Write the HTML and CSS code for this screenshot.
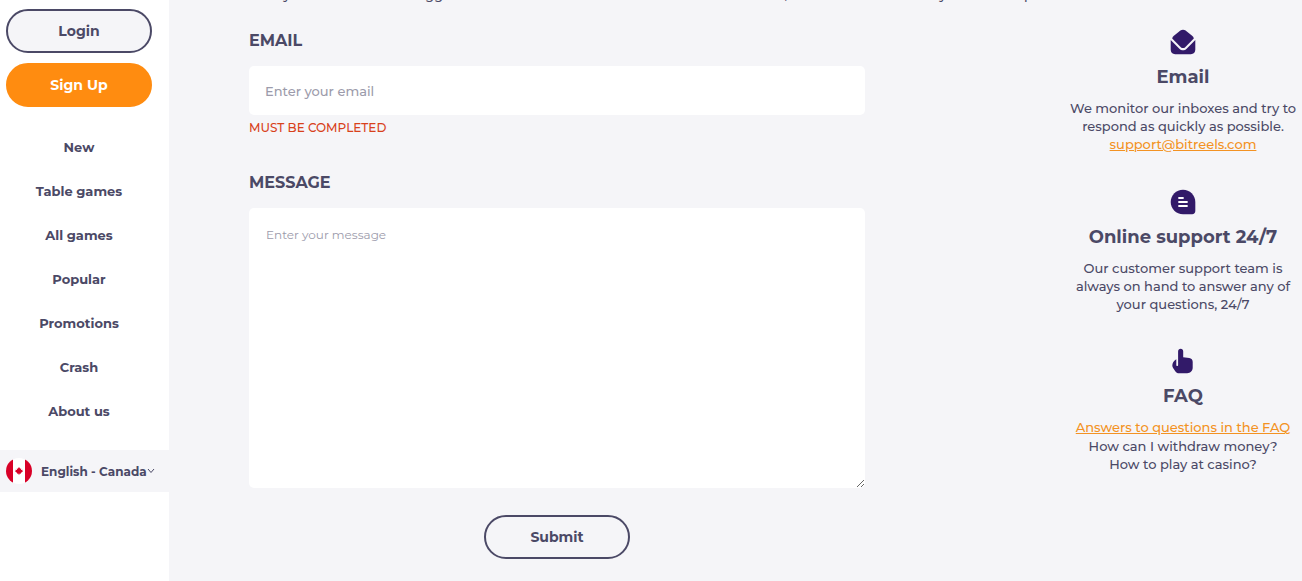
FILE: index.html
```html
<!DOCTYPE html>
<html lang="en">
<head>
    <meta charset="UTF-8">
    <meta name="viewport" content="width=device-width, initial-scale=1.0">
    <title>Contact us</title>
    <link rel="stylesheet" href="styles.css">
</head>
<body>
    <div class="sidebar">
        <button type="button" class="btn">Login</button>
        <button type="button" class="btn btn-orange">Sign Up</button>

        <nav class="menu">
            <a href="#">New</a>
            <a href="#">Table games</a>
            <a href="#">All games</a>
            <a href="#">Popular</a>
            <a href="#">Promotions</a>
            <a href="#">Crash</a>
            <a href="#">About us</a>
        </nav>

        <div class="lang">
            <svg class="flag" viewBox="0 0 26 26" aria-hidden="true">
                <clipPath id="round"><circle cx="13" cy="13" r="13"/></clipPath>
                <g clip-path="url(#round)">
                    <rect width="26" height="26" fill="#fff"/>
                    <rect width="7" height="26" fill="#d80027"/>
                    <rect x="19" width="7" height="26" fill="#d80027"/>
                    <path d="M13 9l1.200 1.800 1-.3-.2 1.500 1.600-.3-.3 1 .7.5-2.200 1.700v.8h-1.500V17h-.6v-1.300h-1.500v-.8L9 13.200l.7-.5-.3-1 1.600.3-.2-1.500 1 .3z" fill="#d80027"/>
                </g>
            </svg>
            <select aria-label="Language">
                <option>English - Canada</option>
            </select>
            <svg class="arrow" viewBox="0 0 8 6" aria-hidden="true"><path d="M1 1l3 3.500 3-3.500" fill="none" stroke="#4b4966"/></svg>
        </div>
    </div>

    <div class="content">
        <p class="intro"><span>It may have several new suggestions that will resolve the matter in a few minutes, but we would rather try to be of help</span></p>

        <div class="columns">
            <form>
                <label for="email">EMAIL</label>
                <input type="email" id="email" name="email" placeholder="Enter your email">
                <div class="error">MUST BE COMPLETED</div>

                <label for="message">MESSAGE</label>
                <textarea id="message" name="message" placeholder="Enter your message"></textarea>

                <button type="submit" class="btn">Submit</button>
            </form>

            <aside>
                <section>
                    <svg class="icon" viewBox="0 0 26 26" fill="#321a69" aria-hidden="true">
                        <path d="M10.400 1.500c1.500-1.100 3.700-1.100 5.200 0l6.800 5.600c.8.700 1.200 1.400 1.400 2.400l-8.600 8.700c-1.200 1.200-3.200 1.200-4.400 0L2.200 9.500c.2-1 .6-1.700 1.400-2.400z"/>
                        <path d="M.7 11l8.700 8.700c2 2 5.200 2 7.200 0l8.700-8.700v9.800c0 2.600-1.800 4.400-4.400 4.400H5.100c-2.600 0-4.400-1.800-4.400-4.400z"/>
                    </svg>
                    <h3>Email</h3>
                    <p>We monitor our inboxes and try to respond as quickly as possible.</p>
                    <a href="mailto:support@bitreels.com">support@bitreels.com</a>
                </section>

                <section>
                    <svg class="icon" viewBox="0 0 26 26" aria-hidden="true">
                        <path d="M13 .7C19.800.7 25.300 6.200 25.300 13v9c0 2-1.200 3.200-3.200 3.200H13C6.200 25.200.7 19.800.7 13S6.200.7 13 .7z" fill="#321a69"/>
                        <path d="M9 9h4M9 13h8M9 17h8" fill="none" stroke="#fff" stroke-width="1.800" stroke-linecap="round"/>
                    </svg>
                    <h3>Online support 24/7</h3>
                    <p>Our customer support team is always on hand to answer any of your questions, 24/7</p>
                </section>

                <section>
                    <svg class="icon" viewBox="0 0 26 26" fill="#321a69" aria-hidden="true">
                        <path d="M10.700.8c1.500 0 2.500 1.100 2.500 2.600v5.800l6 .9c2.300.4 3.500 1.800 3.500 4v5.500c0 3.500-2.200 5.600-5.600 5.600H9.300c-2 0-3.200-.9-4.200-2.300-1.600-2.200-2.800-3.400-2.800-5.300 0-2.600 1.500-5.200 4-6.400v5.700c0 .7.4 1.100.9 1.100s.9-.4.9-1.100V3.400C8.100 1.900 9.200.8 10.700.8z"/>
                    </svg>
                    <h3>FAQ</h3>
                    <a href="#">Answers to questions in the FAQ</a>
                    <p>How can I withdraw money?<br>How to play at casino?</p>
                </section>
            </aside>
        </div>
    </div>
</body>
</html>
```
FILE: styles.css
```css
* { box-sizing: border-box; }
body { display: flex; min-height: 100vh; margin: 0; background-color: #f5f5f8; color: #4b4966; font-family: Montserrat, Inter, sans-serif; font-size: 13px; font-weight: 500; line-height: 18px; }
button, input, select, textarea { font-family: inherit; color: inherit; }
p, h3 { margin: 0; }

.btn { display: block; width: 146px; height: 44px; padding: 0; border: 2px solid #4b4966; border-radius: 22px; background-color: #f5f5f8; font-size: 14px; font-weight: 700; cursor: pointer; }
.btn-orange { margin-top: 10px; border-color: #ff8c10; background-color: #ff8c10; color: #fff; }

.sidebar { flex: none; width: 169px; padding-top: 9px; background-color: #fff; }
.sidebar .btn { margin-left: 6px; }
.menu { width: 158px; margin-top: 18px; }
.menu a { display: block; line-height: 44px; color: #4b4966; font-weight: 700; text-align: center; text-decoration: none; }
.lang { display: flex; align-items: center; height: 42px; margin-top: 17px; padding-left: 6px; background-color: #f5f5f8; }
.lang select { margin-left: 9px; padding: 0; border: 0; background: none; appearance: none; font-size: 12px; font-weight: 700; }
.flag { width: 26px; height: 26px; }
.arrow { width: 8px; height: 6px; }

.content { flex: 1; min-width: 0; padding-left: 80px; }
.intro { display: flex; align-items: flex-end; height: 2px; overflow: hidden; line-height: 16px; white-space: nowrap; }
.columns { display: flex; gap: 199px; }

form { flex: 1; padding-top: 29px; }
label { display: block; margin-bottom: 15px; font-size: 16px; font-weight: 700; line-height: 20px; }
input, textarea { display: block; width: 100%; padding: 16px; border: 0; border-radius: 5px; background-color: #fff; outline: none; }
input { height: 49px; font-size: 13px; font-weight: 500; }
textarea { height: 280px; padding: 17px; font-size: 12px; line-height: 20px; resize: both; }
::placeholder { color: #9c9bab; opacity: 1; }
.error { margin: 4px 0 36px; color: #d8411b; font-size: 12px; }
form .btn { margin: 27px auto 22px; }

aside { flex: none; width: 238px; padding: 27px 4px 0; text-align: center; }
section { margin-bottom: 35px; }
.icon { display: block; width: 26px; height: 26px; margin: 0 auto; }
h3 { margin: 10px 0; font-size: 18px; line-height: 24px; }
aside a { display: block; line-height: 19px; color: #f39223; }
```
